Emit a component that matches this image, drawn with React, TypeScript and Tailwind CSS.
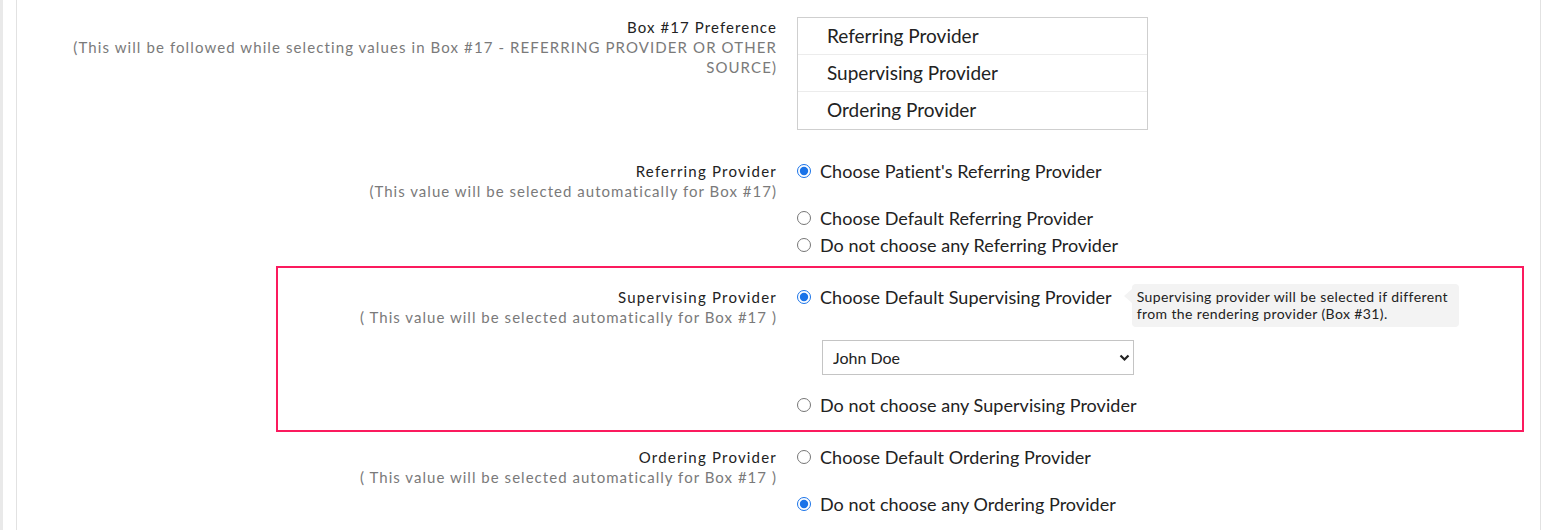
import React from 'react';

const font = { fontFamily: 'Lato, "Noto Sans", sans-serif' };

const Radio: React.FC<{ name: string; label: string; checked?: boolean; className?: string }> = ({
  name,
  label,
  checked,
  className = '',
}) => (
  <label className={`flex items-center h-[27px] ${className}`}>
    <input
      type="radio"
      name={name}
      defaultChecked={checked}
      className="w-[14px] h-[14px] mr-[9px] accent-[#1a73e8]"
    />
    <span className="text-[18px] leading-6 tracking-[0.05px] text-[#222]">{label}</span>
  </label>
);

const FieldLabel: React.FC<{ title: string; sub: React.ReactNode }> = ({ title, sub }) => (
  <div className="text-right pt-[4px]">
    <div className="text-[15px] leading-5 tracking-[1.2px] text-[#222]">{title}</div>
    <div className="text-[15px] leading-5 tracking-[1.03px] text-[#7a7a7a]">{sub}</div>
  </div>
);

const App: React.FC = () => {
  return (
    <div className="flex min-h-[530px] bg-white" style={font}>
      <div className="w-[3px] bg-[#e9e9e9]" />
      <div className="flex-1 pl-[13px] pr-[10px]">
        <div className="border-x border-[#e2e2e2] min-h-[530px]">
          {/* Box 17 preference */}
          <div className="grid grid-cols-[760px_351px] gap-x-[20px] pt-[17px]">
            <div className="text-right">
              <div className="text-[15px] leading-5 tracking-[1.1px] text-[#222]">Box #17 Preference</div>
              <div className="text-[15px] leading-5 tracking-[1.1px] text-[#7a7a7a]">
                (This will be followed while selecting values in Box #17 - REFERRING PROVIDER OR OTHER
                <br />
                SOURCE)
              </div>
            </div>
            <div className="border border-[#cfcfcf]">
              {['Referring Provider', 'Supervising Provider', 'Ordering Provider'].map((item, i) => (
                <div
                  key={item}
                  className={`h-[37px] flex items-center pl-[29px] text-[19px] text-[#222] ${
                    i < 2 ? 'border-b border-[#ececec]' : ''
                  }`}
                >
                  {item}
                </div>
              ))}
            </div>
          </div>

          {/* Referring provider */}
          <div className="grid grid-cols-[760px_1fr] gap-x-[20px] mt-[27px]">
            <FieldLabel title="Referring Provider" sub="(This value will be selected automatically for Box #17)" />
            <div>
              <Radio name="ref" label="Choose Patient's Referring Provider" checked className="mb-[20px]" />
              <Radio name="ref" label="Choose Default Referring Provider" />
              <Radio name="ref" label="Do not choose any Referring Provider" />
            </div>
          </div>

          {/* Supervising provider */}
          <div className="ml-[259px] mr-[16px] mt-[8px] border-2 border-[#fb1a5e] pt-[15px] pb-[12px]">
            <div className="grid grid-cols-[499px_1fr] gap-x-[20px]">
              <FieldLabel title="Supervising Provider" sub="( This value will be selected automatically for Box #17 )" />
              <div>
                <div className="flex items-start">
                  <Radio name="sup" label="Choose Default Supervising Provider" checked />
                  <div className="relative ml-[20px] mt-[1px] bg-[#f3f3f3] rounded-[4px] pl-[5px] pr-[4px] pt-[4px] pb-[5px] w-[327px]">
                    <div className="absolute left-[-8px] top-[5px] w-0 h-0 border-y-[7px] border-y-transparent border-r-[8px] border-r-[#f3f3f3]" />
                    <div className="text-[14px] leading-[17px] tracking-[0.4px] text-[#222]">
                      Supervising provider will be selected if different from the rendering provider (Box #31).
                    </div>
                  </div>
                </div>
                <div className="relative ml-[25px] mt-[13px] w-[312px]">
                  <select
                    defaultValue="John Doe"
                    className="appearance-none w-full h-[35px] border border-[#c4c4c4] bg-white pl-[10px] text-[16px] text-[#222]"
                    style={font}
                  >
                    <option>John Doe</option>
                  </select>
                  <svg
                    className="absolute right-[4px] top-[14px] pointer-events-none"
                    width="11"
                    height="8"
                    viewBox="0 0 11 8"
                  >
                    <path d="M1.5 1.5 L5.5 5.5 L9.5 1.5" fill="none" stroke="#222" strokeWidth="2.2" />
                  </svg>
                </div>
                <Radio name="sup" label="Do not choose any Supervising Provider" className="mt-[16px]" />
              </div>
            </div>
          </div>

          {/* Ordering provider */}
          <div className="grid grid-cols-[760px_1fr] gap-x-[20px] mt-[11px] pb-[20px]">
            <FieldLabel title="Ordering Provider" sub="( This value will be selected automatically for Box #17 )" />
            <div>
              <Radio name="ord" label="Choose Default Ordering Provider" className="mb-[20px]" />
              <Radio name="ord" label="Do not choose any Ordering Provider" checked />
            </div>
          </div>
        </div>
      </div>
    </div>
  );
};

export default App;
